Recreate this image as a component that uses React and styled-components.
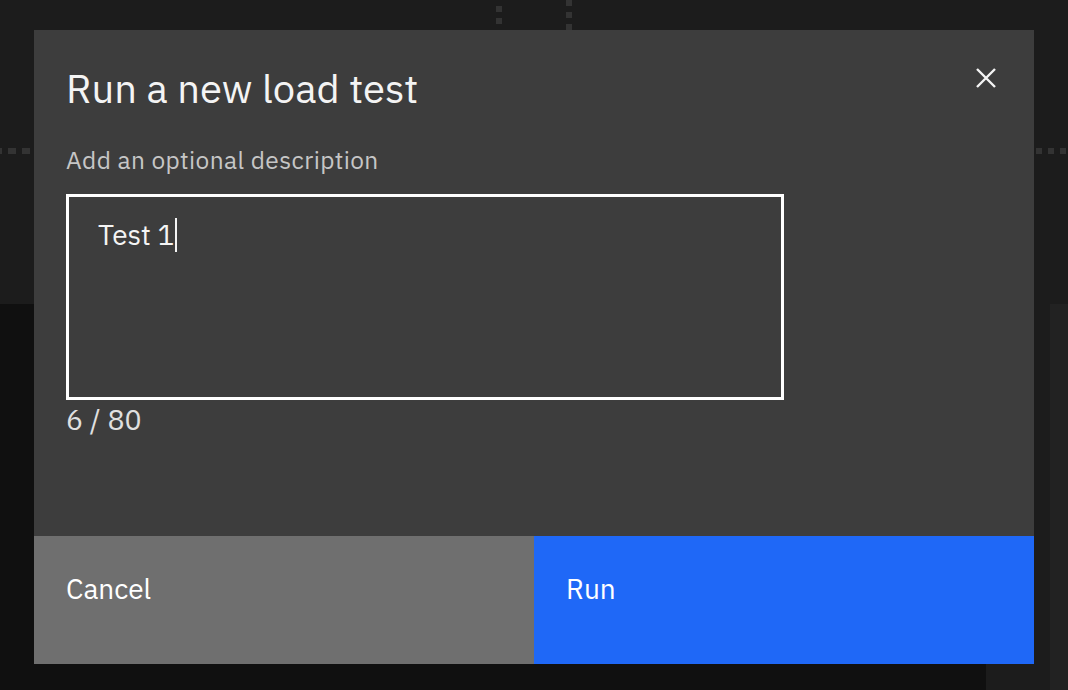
import React from "react";
import styled, { createGlobalStyle } from "styled-components";

const GlobalStyle = createGlobalStyle`
  html, body { margin: 0; padding: 0; }
  body {
    background: #101010;
    font-family: "IBM Plex Sans", Inter, "Noto Sans", sans-serif;
    -webkit-font-smoothing: antialiased;
  }
  #root { min-height: 690px; }
`;

const Page = styled.div`
  width: 1068px;
  height: 690px;
  display: flex;
  flex-direction: column;
  overflow: hidden;
  position: relative;
`;

const TopBand = styled.div`
  height: 304px;
  flex: none;
  background-color: #1c1c1c;
  background-image:
    repeating-linear-gradient(to bottom, transparent 0 6px, #333 6px 12px),
    repeating-linear-gradient(to bottom, #333 0 6px, transparent 6px 12px),
    repeating-linear-gradient(to right, #333 0 2px, transparent 2px 8px, #333 8px 14px),
    repeating-linear-gradient(to right, #333 0 6px, transparent 6px 12px);
  background-size: 6px 30px, 6px 30px, 36px 6px, 32px 6px;
  background-position: 496px 0, 566px 0, 0 148px, 1036px 148px;
  background-repeat: no-repeat;
`;

const LowerBand = styled.div`
  flex: 1;
  display: flex;
`;

const MainArea = styled.div`
  width: 986px;
  background: #101010;
`;

const SideRail = styled.div`
  width: 64px;
  background: #1c1c1c;
`;

const EdgeRail = styled.div`
  flex: 1;
  background: #222222;
`;

const Overlay = styled.div`
  position: absolute;
  inset: 0;
  display: flex;
  justify-content: center;
  align-items: flex-start;
  padding-top: 30px;
`;

const Modal = styled.div`
  width: 1000px;
  height: 634px;
  background: #3d3d3d;
  display: flex;
  flex-direction: column;
  position: relative;
`;

const Header = styled.div`
  padding: 32px 32px 0 32px;
  display: flex;
  justify-content: space-between;
  align-items: flex-start;
`;

const Title = styled.h2`
  margin: 0;
  font-size: 40px;
  line-height: 52px;
  font-weight: 400;
  color: #f4f4f4;
  letter-spacing: 0;
`;

const CloseButton = styled.button`
  position: absolute;
  top: 26px;
  right: 26px;
  width: 44px;
  height: 44px;
  border: none;
  background: transparent;
  padding: 0;
  display: flex;
  align-items: center;
  justify-content: center;
  cursor: pointer;
`;

const Body = styled.div`
  flex: 1;
  padding: 30px 32px 0 32px;
  display: flex;
  flex-direction: column;
`;

const Label = styled.label`
  font-size: 24.5px;
  line-height: 32px;
  color: #c6c6c6;
  letter-spacing: 0.4px;
`;

const TextArea = styled.div`
  margin-top: 18px;
  width: 718px;
  height: 206px;
  box-sizing: border-box;
  border: 3px solid #ffffff;
  padding: 20px 29px;
  font-size: 28px;
  line-height: 36px;
  color: #f4f4f4;
  display: flex;
  align-items: flex-start;
`;

const Caret = styled.span`
  display: inline-block;
  width: 2px;
  height: 34px;
  margin-left: 1px;
  background: #f4f4f4;
  align-self: flex-start;
  margin-top: 1px;
`;

const Counter = styled.div`
  margin-top: 2px;
  font-size: 28.5px;
  line-height: 36px;
  color: #e0e0e0;
`;

const Footer = styled.div`
  display: flex;
  height: 128px;
`;

const FooterButton = styled.button`
  flex: 1;
  border: none;
  margin: 0;
  background: ${(p) => (p.$primary ? "#1f68f7" : "#6f6f6f")};
  color: #ffffff;
  font-family: inherit;
  font-size: 28px;
  line-height: 36px;
  text-align: left;
  padding: 35px 32px 0 32px;
  display: flex;
  align-items: flex-start;
  cursor: pointer;
`;

function CloseIcon() {
  return (
    <svg width="22" height="22" viewBox="0 0 22 22">
      <path d="M2 2 L20 20 M20 2 L2 20" stroke="#f4f4f4" strokeWidth="2.4" />
    </svg>
  );
}

export default function App() {
  return (
    <>
      <GlobalStyle />
      <Page>
        <TopBand />
        <LowerBand>
          <MainArea />
          <SideRail />
          <EdgeRail />
        </LowerBand>
        <Overlay>
          <Modal role="dialog" aria-label="Run a new load test">
            <Header>
              <Title>Run a new load test</Title>
            </Header>
            <CloseButton aria-label="Close">
              <CloseIcon />
            </CloseButton>
            <Body>
              <Label>Add an optional description</Label>
              <TextArea>
                Test 1
                <Caret />
              </TextArea>
              <Counter>6 / 80</Counter>
            </Body>
            <Footer>
              <FooterButton>Cancel</FooterButton>
              <FooterButton $primary>Run</FooterButton>
            </Footer>
          </Modal>
        </Overlay>
      </Page>
    </>
  );
}
